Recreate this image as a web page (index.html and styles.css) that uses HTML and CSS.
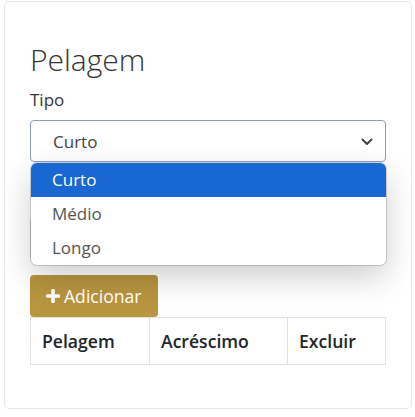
FILE: index.html
```html
<!DOCTYPE html>
<html lang="pt-BR">
<head>
    <meta charset="UTF-8">
    <meta name="viewport" content="width=device-width, initial-scale=1.0">
    <title>Pelagem</title>
    <link rel="stylesheet" href="styles.css">
</head>
<body>
    <div class="card">
        <h2 class="card-title">Pelagem</h2>
        <div class="form-group">
            <label class="form-label">Tipo</label>
            <div class="select-wrap">
                <div class="select-box">
                    <span>Curto</span>
                    <svg class="chevron" width="12" height="8" viewBox="0 0 12 8">
                        <path d="M1.5 1.5 L6 6 L10.5 1.5" fill="none" stroke="#444" stroke-width="2" stroke-linecap="round" stroke-linejoin="round"/>
                    </svg>
                </div>
                <ul class="select-menu">
                    <li class="option selected">Curto</li>
                    <li class="option">Médio</li>
                    <li class="option">Longo</li>
                </ul>
            </div>
        </div>
        <!-- campo escondido atrás da lista aberta -->
        <div class="form-group under-menu">
            <div class="input-box"></div>
        </div>
        <button class="btn-add">
            <svg class="plus" width="14" height="14" viewBox="0 0 14 14">
                <path d="M7 1.5 V12.5 M1.5 7 H12.5" stroke="#fff" stroke-width="3.6" stroke-linecap="round"/>
            </svg>
            Adicionar
        </button>
        <table class="coat-table">
            <thead>
                <tr>
                    <th class="col-coat">Pelagem</th>
                    <th class="col-extra">Acréscimo</th>
                    <th>Excluir</th>
                </tr>
            </thead>
        </table>
    </div>
</body>
</html>
```

FILE: styles.css
```css
body {
    margin: 0;
    font-family: 'Open Sans', 'Liberation Sans', sans-serif;
    color: #212529;
    background: #fff;
}
.card {
    box-sizing: border-box;
    width: 408px;
    height: 408px;
    margin: 1px 0 0 4px;
    padding: 40px 25px 0 25px;
    border: 1px solid #e4e8ee;
    border-radius: 5px;
}
.card-title {
    margin: 0 0 10px 0;
    font-size: 30px;
    font-weight: 300;
    line-height: 36px;
    color: #333;
}
.form-group {
    margin-bottom: 16px;
}
.form-label {
    display: block;
    margin-bottom: 8px;
    font-size: 17px;
    line-height: 24px;
    color: #333;
}
.select-wrap {
    position: relative;
}
.select-box {
    box-sizing: border-box;
    height: 42px;
    display: flex;
    align-items: center;
    justify-content: space-between;
    padding: 0 12px 0 22px;
    border: 1px solid #8e9bb1;
    border-radius: 4px;
    font-size: 17px;
    color: #444;
}
.chevron {
    margin-top: 1px;
}
.select-menu {
    position: absolute;
    top: 43px;
    left: 1px;
    right: 0;
    margin: 0;
    padding: 0;
    list-style: none;
    background: #fff;
    border-radius: 6px;
    overflow: hidden;
    box-shadow: 0 0 0 1px rgba(0, 0, 0, 0.16), 0 12px 32px rgba(0, 0, 0, 0.2);
    z-index: 5;
}
.option {
    height: 34px;
    line-height: 34px;
    padding-left: 21px;
    font-size: 17px;
    color: #555;
}
.option.selected {
    background: #1967d2;
    color: #fff;
}
.under-menu {
    padding-top: 39px;
    margin-bottom: 14px;
}
.input-box {
    height: 42px;
    border: 1px solid #ced4da;
    border-radius: 4px;
}
.btn-add {
    display: flex;
    align-items: center;
    gap: 4px;
    height: 42px;
    padding: 0 16px;
    border: none;
    border-radius: 4px;
    background: #b8953f;
    color: #fff;
    font-family: 'Open Sans', 'Liberation Sans', sans-serif;
    font-size: 17.6px;
}
.coat-table {
    width: 100%;
    border-collapse: collapse;
}
.coat-table th {
    height: 46px;
    padding: 0 11px;
    border: 1px solid #dee2e6;
    text-align: left;
    font-size: 17.6px;
    font-weight: 600;
    color: #212529;
}
.col-coat {
    width: 96px;
}
.col-extra {
    width: 115px;
}
```
